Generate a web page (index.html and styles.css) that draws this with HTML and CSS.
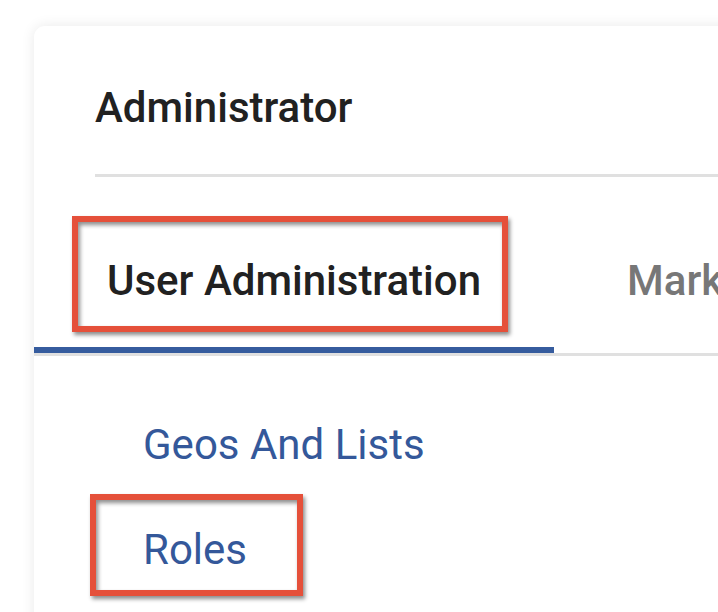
FILE: index.html
```html
<!DOCTYPE html>
<html lang="en">
<head>
<meta charset="utf-8">
<title>Administrator</title>
<link rel="stylesheet" href="styles.css">
</head>
<body>
<div class="page">
  <section class="card">
    <header class="card-header">
      <h1 class="title">Administrator</h1>
    </header>
    <nav class="tabs">
      <div class="tab tab-active">
        User Administration
        <span class="mark mark-tab"></span>
      </div>
      <div class="tab">Markets</div>
    </nav>
    <ul class="links">
      <li class="link-item"><a class="link" href="#">Geos And Lists</a></li>
      <li class="link-item">
        <a class="link" href="#">Roles</a>
        <span class="mark mark-roles"></span>
      </li>
    </ul>
  </section>
</div>
</body>
</html>
```

FILE: styles.css
```css
html, body {
  margin: 0;
  padding: 0;
  background: #ffffff;
  overflow: hidden;
  font-family: Roboto, "Liberation Sans", Arial, sans-serif;
}

.page {
  padding: 26px 0 0 34px;
  width: 1200px;
  height: 900px;
}

.card {
  width: 1000px;
  min-height: 800px;
  background: #ffffff;
  border-radius: 11px;
  box-shadow: 0 0 14px rgba(0, 0, 0, 0.09);
}

.card-header {
  padding: 57px 0 0 61px;
}

.title {
  margin: 0;
  padding-bottom: 41px;
  border-bottom: 3px solid #e0e0e0;
  font-size: 42px;
  line-height: 50px;
  font-weight: 500;
  color: #212121;
}

.tabs {
  display: flex;
  margin-top: 39px;
  border-bottom: 3px solid #e0e0e0;
  white-space: nowrap;
}

.tab {
  position: relative;
  padding: 40px 73px 41px;
  margin-bottom: -3px;
  border-bottom: 6px solid transparent;
  font-size: 42px;
  line-height: 50px;
  font-weight: 500;
  color: #777777;
}

.tab-active {
  color: #212121;
  border-bottom-color: #365c9e;
  margin-bottom: 0;
}

.tab:not(.tab-active) {
  border-bottom: 0;
}

.links {
  list-style: none;
  margin: 0;
  padding: 64px 0 0 109px;
  display: flex;
  flex-direction: column;
  gap: 55px;
}

.link-item {
  position: relative;
}

.link {
  font-size: 42px;
  line-height: 50px;
  font-weight: 400;
  color: #34589a;
  text-decoration: none;
}

.mark {
  position: absolute;
  box-sizing: border-box;
  border: 6px solid #e5503a;
  box-shadow: 2px 3px 4px rgba(0, 0, 0, 0.45), inset 2px 3px 4px rgba(0, 0, 0, 0.45);
  pointer-events: none;
}

.mark-tab {
  left: 38px;
  top: 0;
  width: 436px;
  height: 116px;
}

.mark-roles {
  left: -53px;
  top: -31px;
  width: 213px;
  height: 102px;
}
```
